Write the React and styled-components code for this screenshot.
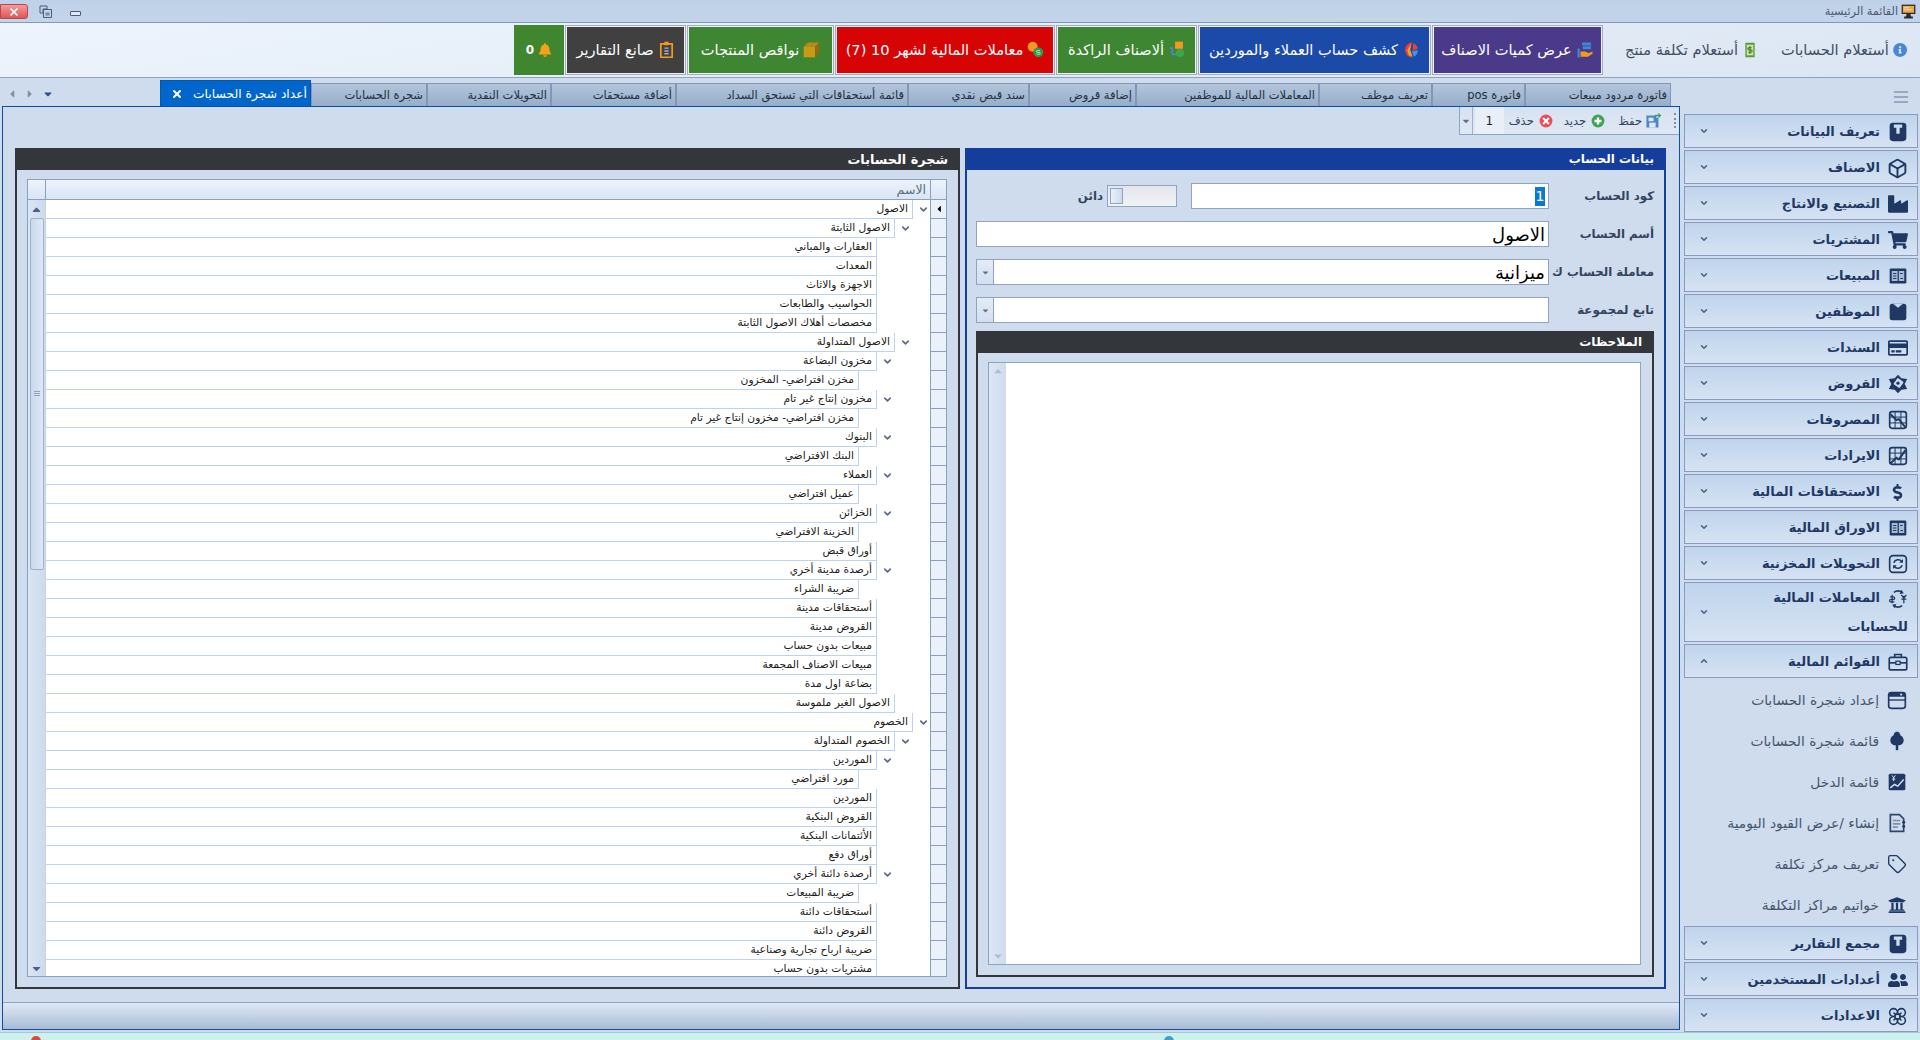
import React from "react";
import styled, { createGlobalStyle } from "styled-components";
import { FaBell, FaInfoCircle, FaIndustry, FaShoppingCart, FaDollarSign, FaUniversity, FaUserFriends, FaRegCreditCard, FaCaretDown, FaCaretLeft, FaCaretRight, FaCaretUp } from "react-icons/fa";
import { LuBox, LuChevronDown, LuChevronUp, LuFlower, LuTag, LuX, LuMenu } from "react-icons/lu";

const Global = createGlobalStyle`
  html, body { margin: 0; padding: 0; height: 100%; overflow: hidden; background: #cfdcee; }
  body { font-family: "DejaVu Sans", "Noto Sans", Tahoma, sans-serif; }
  #root { height: 100%; }
  * { box-sizing: border-box; }
`;

const Shell = styled.div`
  direction: rtl;
  width: 1920px;
  height: 1040px;
  display: flex;
  flex-direction: column;
  background: #cfdcee;
  overflow: hidden;
`;

/* ---------- title bar ---------- */
const TitleBar = styled.div`
  height: 23px;
  flex: none;
  display: flex;
  align-items: center;
  padding: 0 4px 0 0;
  background: linear-gradient(#bfd1e8, #c3d4ea);
  border-bottom: 1px solid #7f9bbb;
`;
const TitleText = styled.span`
  font-size: 11.2px;
  color: #4a5a73;
  margin-right: 3px;
`;
const WindowControls = styled.div`
  margin-right: auto;
  display: flex;
  align-items: center;
  direction: ltr;
  gap: 11px;
`;
const CloseButton = styled.div`
  width: 28px;
  height: 15px;
  margin-top: 1px;
  border: 1px solid #b64a4a;
  border-radius: 0 3px 3px 0;
  background: linear-gradient(#f59a9a, #dd5858);
  display: flex;
  align-items: center;
  justify-content: center;
  color: #fff;
`;
const RestoreIcon = styled.svg`
  width: 13px;
  height: 13px;
  color: #4a5a7a;
`;
const MinimizeIcon = styled.div`
  width: 11px;
  height: 5px;
  margin: 4px 0 0 7px;
  border: 1px solid #4a5a7a;
  border-radius: 1px;
  background: #dfe8f4;
`;

/* ---------- ribbon ---------- */
const Ribbon = styled.div`
  height: 55px;
  flex: none;
  display: flex;
  align-items: center;
  gap: 1px;
  padding-right: 13px;
  padding-bottom: 1px;
  background: linear-gradient(170deg, #edf4fd, #dce6f2);
  border-bottom: 1px solid #8ba3c0;
`;
const PlainItem = styled.div`
  width: ${(p) => p.$w}px;
  margin-left: ${(p) => p.$gap}px;
  display: flex;
  align-items: center;
  gap: 4px;
  font-size: 14.6px;
  color: #3f4d63;
  white-space: nowrap;
`;
const RibbonButton = styled.div`
  width: ${(p) => p.$w}px;
  height: 50px;
  display: flex;
  align-items: center;
  justify-content: center;
  gap: 4px;
  font-size: 14.6px;
  color: #fff;
  white-space: nowrap;
  background: ${(p) => p.$bg};
  border: 2px solid #eef2f7;
  outline: 1px solid #a5acb7;
  outline-offset: -1px;
`;
const BellButton = styled.div`
  width: 50px;
  height: 50px;
  display: flex;
  align-items: center;
  justify-content: center;
  gap: 4px;
  color: #fff;
  font-size: 12px;
  font-weight: bold;
  background: #40862f;
`;

/* ---------- body ---------- */
const Body = styled.div`
  flex: 1;
  min-height: 0;
  display: flex;
`;
const Sidebar = styled.aside`
  width: 236px;
  flex: none;
  padding: 0 2px 0 0;
  overflow: hidden;
  display: flex;
  flex-direction: column;
  gap: 2px;
`;
const SidebarTop = styled.div`
  height: 34px;
  flex: none;
  display: flex;
  align-items: center;
  padding-right: 7px;
  padding-top: 3px;
  color: #5f7595;
`;
const GroupItem = styled.div`
  flex: none;
  height: ${(p) => (p.$tall ? 60 : 34)}px;
  display: flex;
  align-items: center;
  padding: 0 9px 0 14px;
  border: 1px solid #8a9bbf;
  background: linear-gradient(#bfd4ec, #d6e3f3);
  color: #1f3864;
  font-size: 13px;
  font-weight: bold;
  line-height: 29px;
`;
const GroupLabel = styled.div`
  flex: 1;
  min-width: 0;
`;
const IconSlot = styled.span`
  display: inline-flex;
  width: 21px;
  height: 20px;
  margin-left: 7px;
  align-items: center;
  justify-content: center;
  vertical-align: middle;
  color: ${(p) => p.$color || "#1f3864"};
`;
const Chevron = styled.span`
  display: flex;
  color: #4b5d80;
`;
const SubList = styled.div`
  flex: none;
  display: flex;
  flex-direction: column;
  margin: -1px 0 -1px;
`;
const SubItem = styled.div`
  height: 41px;
  display: flex;
  align-items: center;
  padding-right: 11px;
  color: #46566e;
  font-size: 13.8px;
  white-space: nowrap;
`;

const Main = styled.main`
  flex: 1;
  min-width: 0;
  display: flex;
  flex-direction: column;
  padding: 0 0 2px 2px;
  margin-right: 4px;
`;
const TabStrip = styled.div`
  height: 28px;
  flex: none;
  display: flex;
  align-items: flex-end;
  padding-right: 9px;
`;
const Tab = styled.div`
  width: ${(p) => p.$w}px;
  height: ${(p) => (p.$active ? 26 : 23)}px;
  flex: none;
  display: flex;
  align-items: center;
  justify-content: space-between;
  padding: 0 3px 0 10px;
  font-size: ${(p) => (p.$active ? 12.3 : 11.5)}px;
  white-space: nowrap;
  overflow: hidden;
  color: ${(p) => (p.$active ? "#fff" : "#22303f")};
  background: ${(p) => (p.$active ? "#0066cc" : "linear-gradient(#b4c5dc, #96adc9)")};
  border: 1px solid ${(p) => (p.$active ? "#0058b0" : "#8097b6")};
  border-bottom: none;
`;
const TabNav = styled.div`
  margin-right: auto;
  margin-bottom: 6px;
  direction: ltr;
  display: flex;
  align-items: center;
  gap: 6px;
  color: #7f8fa8;
  width: 157px;
  padding-left: 4px;
`;
const TabNavActive = styled.span`
  display: flex;
  color: #2a4a9a;
`;
const Panel = styled.section`
  flex: 1;
  min-height: 0;
  display: flex;
  flex-direction: column;
  border: 1px solid #0d4fa3;
  background: #cfdcee;
`;
const ToolRow = styled.div`
  height: 28px;
  flex: none;
  display: flex;
`;
const ToolBar = styled.div`
  width: 220px;
  display: flex;
  align-items: center;
  border-bottom: 1px solid #8ea4c4;
  border-left: 1px solid #8ea4c4;
  background: linear-gradient(#d7e2f1, #dfe8f4);
  font-size: 11.5px;
  color: #33445e;
`;
const Grip = styled.div`
  width: 2px;
  height: 15px;
  margin: 0 3px 0 12px;
  border-right: 2px dotted #7f8fa8;
`;
const ToolAction = styled.div`
  display: flex;
  align-items: center;
  gap: ${(p) => p.$inner}px;
  margin-left: ${(p) => p.$gap}px;
  white-space: nowrap;
`;
const PageBox = styled.div`
  width: 29px;
  height: 100%;
  display: flex;
  align-items: center;
  justify-content: center;
  font-size: 12px;
  background: #e9eff7;
  color: #222;
`;
const ToolDrop = styled.div`
  flex: 1;
  height: 100%;
  margin-right: 2px;
  display: flex;
  align-items: center;
  justify-content: center;
  color: #5f6f88;
  border-right: 1px solid #9fb2cd;
`;
const Content = styled.div`
  flex: 1;
  min-height: 0;
  display: flex;
  gap: 5px;
  padding: 13px 13px 13px 12px;
`;
const GroupBox = styled.div`
  ${(p) => (p.$w ? `width: ${p.$w}px; flex: none;` : "flex: 1; min-width: 0;")}
  margin-top: ${(p) => p.$pull || 0}px;
  display: flex;
  flex-direction: column;
  border: 2px solid ${(p) => p.$color};
  border-top: none;
`;
const GroupHead = styled.div`
  height: 22px;
  flex: none;
  margin: 0 -2px;
  padding: 0 12px;
  display: flex;
  align-items: center;
  font-size: ${(p) => p.$size || 12}px;
  font-weight: bold;
  color: #fff;
  background: ${(p) => p.$color};
`;
const FormArea = styled.div`
  flex: 1;
  min-height: 0;
  display: flex;
  flex-direction: column;
  gap: 12px;
  padding: 13px 10px 10px 9px;
`;
const FormRow = styled.div`
  height: 26px;
  flex: none;
  display: flex;
  align-items: center;
`;
const FieldLabel = styled.div`
  width: 105px;
  flex: none;
  font-size: 11.8px;
  font-weight: 600;
  color: #33445e;
  white-space: nowrap;
`;
const Field = styled.div`
  ${(p) => (p.$w ? `width: ${p.$w}px; flex: none;` : "flex: 1; min-width: 0;")}
  height: 26px;
  display: flex;
  align-items: center;
  padding: 0 3px;
  background: #fff;
  border: 1px solid #8ea4c4;
  color: #000;
  font-size: 18px;
  font-weight: 500;
`;
const Selected = styled.span`
  display: inline-block;
  width: 10px;
  height: 19px;
  line-height: 19px;
  text-align: center;
  font-size: 14px;
  background: #0a78d7;
  color: #fff;
`;
const ComboButton = styled.div`
  width: 17px;
  height: 26px;
  flex: none;
  border: 1px solid #8ea4c4;
  border-right: none;
  display: flex;
  align-items: center;
  justify-content: center;
  color: #5f6f88;
  background: linear-gradient(#e3ecf6, #d3dff0);
`;
const Toggle = styled.div`
  width: 70px;
  height: 22px;
  margin-right: 14px;
  flex: none;
  padding: 2px;
  display: flex;
  direction: ltr;
  border: 1px solid #8ea4c4;
  background: linear-gradient(#e2e5ea, #f2f3f5);
`;
const ToggleKnob = styled.div`
  width: 13px;
  height: 100%;
  border: 1px solid #8ea4c4;
  background: linear-gradient(90deg, #e9f0f9, #cddbed);
`;
const SideLabel = styled.span`
  margin-right: 4px;
  font-size: 11.8px;
  font-weight: 600;
  color: #33445e;
`;
const NotesBody = styled.div`
  flex: 1;
  min-height: 0;
  display: flex;
  padding: 9px 11px 10px 10px;
`;
const Memo = styled.div`
  flex: 1;
  display: flex;
  background: #fff;
  border: 1px solid #8ea4c4;
`;
const MemoBar = styled.div`
  width: 17px;
  margin-right: auto;
  display: flex;
  flex-direction: column;
  justify-content: space-between;
  align-items: center;
  padding: 2px 0;
  color: #b3bdcc;
  background: linear-gradient(90deg, #dce7f3, #cfdcee);
`;
const GridArea = styled.div`
  flex: 1;
  min-height: 0;
  display: flex;
  padding: 9px 11px 10px 10px;
`;
const DataGrid = styled.div`
  flex: 1;
  min-width: 0;
  display: flex;
  flex-direction: column;
  border: 1px solid #8aa0c0;
  background: #fff;
`;
const GridHead = styled.div`
  height: 20px;
  flex: none;
  display: flex;
  background: linear-gradient(#ecf3fc, #d9e5f4);
  border-bottom: 1px solid #8aa0c0;
`;
const HeadCorner = styled.div`
  width: ${(p) => p.$w}px;
  flex: none;
  border-right: ${(p) => (p.$edge ? "1px solid #8aa0c0" : "none")};
  border-left: ${(p) => (p.$edge ? "none" : "1px solid #8aa0c0")};
`;
const HeadTitle = styled.div`
  flex: 1;
  padding: 0 4px 0 0;
  font-size: 12.5px;
  line-height: 19px;
  color: #5a6a85;
`;
const GridBody = styled.div`
  flex: 1;
  min-height: 0;
  display: flex;
`;
const RowList = styled.div`
  flex: 1;
  min-width: 0;
  overflow: hidden;
`;
const TreeRow = styled.div`
  height: 19px;
  display: flex;
`;
const RowMark = styled.div`
  width: 16px;
  flex: none;
  display: flex;
  align-items: center;
  justify-content: center;
  color: #000;
  background: #e9f1fa;
  border-left: 1px solid #8aa0c0;
  border-bottom: 1px solid #8aa0c0;
`;
const Indent = styled.div`
  width: ${(p) => 18 * (p.$level + 1) - 1}px;
  flex: none;
  display: flex;
  align-items: center;
  justify-content: flex-end;
  padding-left: 5px;
  color: #5b6a86;
`;
const TreeCell = styled.div`
  flex: 1;
  min-width: 0;
  padding: 0 4px;
  font-size: 10.7px;
  line-height: 18px;
  white-space: nowrap;
  color: #1c1c1c;
  border-right: 1px solid #bcd3ee;
  border-bottom: 1px solid #bcd3ee;
`;
const ScrollBar = styled.div`
  width: 18px;
  flex: none;
  display: flex;
  flex-direction: column;
  align-items: center;
  justify-content: space-between;
  padding: 3px 0 1px;
  color: #4f6286;
  border-right: 1px solid #c6d4e6;
  background: linear-gradient(90deg, #dbe6f3, #ccdaed);
`;
const ScrollThumb = styled.div`
  width: 14px;
  height: 352px;
  margin: 2px 0 auto;
  border: 1px solid #9fb2cd;
  border-radius: 2px;
  background: linear-gradient(90deg, #c9d8ea, #e0e9f5);
  display: flex;
  align-items: center;
  justify-content: center;
`;
const ThumbGrip = styled.div`
  width: 6px;
  height: 6px;
  background: repeating-linear-gradient(#8fa3c0 0 1px, transparent 1px 2px);
`;
const StatusBar = styled.div`
  height: 27px;
  flex: none;
  border-top: 1px solid #8ea4c4;
  background: linear-gradient(#dfe9f6, #a9bbd4);
`;
const TaskStrip = styled.div`
  height: 8px;
  flex: none;
  position: relative;
  background: #cdf1ef;
  border-top: 1px solid #a9c4d2;
`;
const TaskDot = styled.span`
  position: absolute;
  top: 3px;
  left: ${(p) => p.$x}px;
  width: 10px;
  height: 10px;
  border-radius: 50%;
  background: ${(p) => p.$bg};
`;

/* ---------- drawn icons ---------- */
const Svg = ({ children, s = 20, vb = "0 0 24 24" }) => (
  <svg width={s} height={s} viewBox={vb} aria-hidden="true">{children}</svg>
);
const NAVY = "#1f3864";
const BookIcon = () => (
  <Svg><rect x="2" y="1" width="20" height="22" rx="4" fill={NAVY} /><path d="M7 3h10v4h-3v7H10V7H7z" fill="#cfdcee" /></Svg>
);
const LedgerIcon = () => (
  <Svg><rect x="2" y="3" width="20" height="18" rx="1.5" fill={NAVY} /><rect x="4.5" y="6" width="7" height="12" fill="#a8bcd6" /><rect x="13" y="6" width="6.5" height="12" fill="#a8bcd6" /><path d="M6 9h4M6 12h4M6 15h4M14.5 9h3M15 15h3" stroke={NAVY} strokeWidth="1.3" /></Svg>
);
const ShirtIcon = () => (
  <Svg><rect x="2" y="2" width="20" height="20" rx="3" fill={NAVY} /><path d="M6 2l6 5 6-5v0h-2l-4 3-4-3z" fill="#cfdcee" /><path d="M8 2l4 4 4-4z" fill="#cfdcee" /></Svg>
);
const GridChart = ({ up }) => (
  <Svg>
    <rect x="2" y="2" width="20" height="20" rx="3" fill="none" stroke={NAVY} strokeWidth="2" />
    <path d="M8.5 2v20M15.5 2v20M2 8.5h20M2 15.5h20" stroke={NAVY} strokeWidth="1.2" />
    <path d={up ? "M3 21l7-7 3 2 8-11" : "M3 5l7 7 3-1 8 10"} fill="none" stroke={NAVY} strokeWidth="2.4" />
  </Svg>
);
const LoanIcon = () => (
  <Svg><path d="M12 1l4 4 7 1-3 6 3 6-7 1-4 4-4-4-7-1 3-6-3-6 7-1z" fill={NAVY} /><rect x="8" y="6" width="9" height="9" rx="1" transform="rotate(35 12 11)" fill="#cfdcee" /><circle cx="12" cy="11" r="2" fill={NAVY} /></Svg>
);
const TransferIcon = () => (
  <Svg><rect x="2" y="2" width="20" height="20" rx="4" fill="none" stroke={NAVY} strokeWidth="2" /><path d="M7 10.5A5.5 5.5 0 0 1 16.5 9M17 13.5A5.5 5.5 0 0 1 7.5 15" fill="none" stroke={NAVY} strokeWidth="2" /><path d="M18 6v4.5h-4.5zM6 18v-4.5h4.5z" fill={NAVY} /></Svg>
);
const ExchangeIcon = () => (
  <Svg><g fill="none" stroke={NAVY} strokeWidth="2"><path d="M7 4a9 9 0 0 1 10 0M7 20a9 9 0 0 0 10 0" /></g><path d="M16 1l3 4-5 1zM8 23l-3-4 5-1z" fill={NAVY} /><path d="M5 7v10M2.5 9.5h4a1.5 1.5 0 0 1 0 3h-3a1.5 1.5 0 0 0 0 3h4M19 8v9M16 7l3 4 3-4M16 12h6" fill="none" stroke={NAVY} strokeWidth="1.5" /></Svg>
);
const BriefcaseIcon = () => (
  <Svg><rect x="1.5" y="6.5" width="21" height="15" rx="2" fill="none" stroke={NAVY} strokeWidth="2" /><path d="M8 6V3h8v3" fill="none" stroke={NAVY} strokeWidth="2" /><path d="M2 13h20" stroke={NAVY} strokeWidth="2" /><rect x="9.5" y="11" width="5" height="4" fill="#cfdcee" stroke={NAVY} strokeWidth="1.5" /></Svg>
);
const ChartOfAccountsIcon = () => (
  <Svg><rect x="2" y="3" width="20" height="19" rx="3" fill="none" stroke={NAVY} strokeWidth="2" /><path d="M2 8c0-3 1-5 4-5h13c2 0 3 2 3 5z" fill={NAVY} /><path d="M2 12h20" stroke={NAVY} strokeWidth="1.6" /><circle cx="17" cy="5.5" r="1.3" fill="#cfdcee" /></Svg>
);
const TreeIcon = () => (
  <Svg><path d="M12 1c3 0 4 3 4 4 3 1 4 4 4 6 0 4-3 6-6 6h-4c-3 0-6-2-6-6 0-2 1-5 4-6 0-1 1-4 4-4z" fill={NAVY} /><path d="M10.5 15h3v8h-3z" fill={NAVY} /></Svg>
);
const IncomeIcon = () => (
  <Svg><rect x="2" y="2" width="20" height="20" rx="2" fill={NAVY} /><path d="M4 19l5-4 4 2 7-8" fill="none" stroke="#cfdcee" strokeWidth="1.8" /><path d="M6 4l2 3 2-3M8 7v4M6 8.5h4" fill="none" stroke="#cfdcee" strokeWidth="1.2" /></Svg>
);
const JournalIcon = () => (
  <Svg><path d="M4 2h11l5 5v15H4z" fill="none" stroke="#2f4670" strokeWidth="2" /><path d="M7 9h9M7 13h9M7 17h6" stroke="#7f8fa8" strokeWidth="2" /><circle cx="20" cy="11" r="1.8" fill={NAVY} /><circle cx="20" cy="16" r="1.8" fill={NAVY} /></Svg>
);
const SaveIcon = () => (
  <Svg s={17}><path d="M2 5h14v3h3v14H2z" fill="#4f86c6" /><rect x="5" y="8" width="7" height="5" fill="#dfe8f4" /><rect x="6" y="15" width="9" height="7" fill="#dfe8f4" /><path d="M14 4h5V1l4 4-4 4V6h-5z" fill="#3ba54a" /></Svg>
);
const PlusCircle = () => (
  <Svg s={14}><circle cx="12" cy="12" r="11" fill="#3aa655" /><path d="M12 6v12M6 12h12" stroke="#fff" strokeWidth="4" /></Svg>
);
const CrossCircle = () => (
  <Svg s={14}><circle cx="12" cy="12" r="11" fill="#ee4b55" /><path d="M7 7l10 10M17 7L7 17" stroke="#fff" strokeWidth="3.5" /></Svg>
);
const MoneyNote = () => (
  <Svg s={16}><rect x="5" y="1" width="14" height="22" rx="1" fill="#5a9a3a" /><rect x="7" y="4" width="10" height="16" fill="#cfe2a8" /><path d="M12 6v12M14.5 8.5h-4a1.7 1.7 0 0 0 0 3.4h3a1.7 1.7 0 0 1 0 3.4H9.5" fill="none" stroke="#3b7a25" strokeWidth="1.6" /></Svg>
);
const StockIcon = () => (
  <Svg s={18}><rect x="8" y="2" width="12" height="4" fill="#3f86d6" /><rect x="9" y="7" width="11" height="4" fill="#3f86d6" /><rect x="2" y="10" width="3" height="12" fill="#3f86d6" /><path d="M6 14h6c2 0 3 2 5 2l5-2v3l-6 4H6z" fill="#f39a1e" /></Svg>
);
const PieIcon = () => (
  <Svg s={18}><path d="M14 2a10 10 0 1 0 0 20l-4-10z" fill="#e8413c" /><path d="M15 3a10 10 0 0 1 6 7l-7 3z" fill="#e8413c" /><path d="M21 12a10 10 0 0 1-5 9l-3-7z" fill="#4a90e2" /><path d="M12 4l-1 8 3 9-5-2-2-7z" fill="#f0a02a" /></Svg>
);
const CartBoxIcon = () => (
  <Svg s={17}><rect x="10" y="1" width="11" height="10" fill="#f39a1e" /><path d="M2 10h4v9h9" fill="none" stroke="#4f86c6" strokeWidth="2.5" /><circle cx="17" cy="17" r="6" fill="#3ba54a" /></Svg>
);
const CoinsIcon = () => (
  <Svg s={17}><circle cx="8" cy="8" r="7" fill="#f39a1e" /><circle cx="16" cy="16" r="7" fill="#2f9a4a" /><path d="M18.5 13.5h-4a1.2 1.2 0 0 0 0 2.5h3a1.2 1.2 0 0 1 0 2.5h-4" fill="none" stroke="#bde3c4" strokeWidth="1.3" /></Svg>
);
const CrateIcon = () => (
  <Svg s={17}><path d="M1 8l6-6h16l-6 6z" fill="#b98a16" /><path d="M1 8h16v15H1z" fill="#c99a16" /><path d="M17 8l6-6v15l-6 6z" fill="#8f6c10" /></Svg>
);
const ClipIcon = () => (
  <Svg s={17}><path d="M4 4h16v19H4z" fill="none" stroke="#f39a1e" strokeWidth="2.4" /><rect x="9" y="1" width="6" height="5" fill="#f39a1e" /><path d="M9 10h6M9 14h6M9 18h6" stroke="#9fb2cd" strokeWidth="2" /></Svg>
);
const DesktopIcon = () => (
  <Svg s={15}><rect x="1" y="1" width="22" height="15" fill="#2b2b2b" /><rect x="3" y="3" width="18" height="11" fill="#f0a848" /><path d="M5 6h8M5 9h12" stroke="#fbe3b5" strokeWidth="1.5" /><path d="M9 16h6l1 4H8zM5 20h14v3H5z" fill="#2b2b2b" /></Svg>
);

const TABS = [
  ["فاتورة مردود مبيعات", 146], ["فاتورة pos", 93], ["تعريف موظف", 113],
  ["المعاملات المالية للموظفين", 183], ["إضافة قروض", 107], ["سند قبض نقدي", 121],
  ["قائمة أستحقاقات التي تستحق السداد", 232], ["أضافة مستحقات", 125], ["التحويلات النقدية", 124],
  ["شجرة الحسابات", 116],
];

const TOP_GROUPS = [
  ["تعريف البيانات", <BookIcon />], ["الاصناف", <LuBox size={21} strokeWidth={2.2} />],
  ["التصنيع والانتاج", <FaIndustry size={20} />], ["المشتريات", <FaShoppingCart size={20} />],
  ["المبيعات", <LedgerIcon />], ["الموظفين", <ShirtIcon />],
  ["السندات", <FaRegCreditCard size={20} />], ["القروض", <LoanIcon />],
  ["المصروفات", <GridChart />], ["الايرادات", <GridChart up />],
  ["الاستحقاقات المالية", <FaDollarSign size={17} />], ["الاوراق المالية", <LedgerIcon />],
  ["التحويلات المخزنية", <TransferIcon />],
];
const SUB_ITEMS = [
  ["إعداد شجرة الحسابات", <ChartOfAccountsIcon />],
  ["قائمة شجرة الحسابات", <TreeIcon />],
  ["قائمة الدخل", <IncomeIcon />],
  ["إنشاء /عرض القيود اليومية", <JournalIcon />],
  ["تعريف مركز تكلفة", <LuTag size={20} strokeWidth={1.6} />],
  ["خواتيم مراكز التكلفة", <FaUniversity size={18} />],
];
const BOTTOM_GROUPS = [
  ["مجمع التقارير", <BookIcon />], ["أعدادات المستخدمين", <FaUserFriends size={20} />],
  ["الاعدادات", <LuFlower size={21} strokeWidth={1.8} />],
];

const TREE = [
  ["الاصول", 0, 1], ["الاصول الثابتة", 1, 1], ["العقارات والمباني", 2], ["المعدات", 2], ["الاجهزة والاثاث", 2],
  ["الحواسيب والطابعات", 2], ["مخصصات أهلاك الاصول الثابتة", 2], ["الاصول المتداولة", 1, 1], ["مخزون البضاعة", 2, 1],
  ["مخزن افتراضي- المخزون", 3], ["مخزون إنتاج غير تام", 2, 1], ["مخزن افتراضي- مخزون إنتاج غير تام", 3],
  ["البنوك", 2, 1], ["البنك الافتراضي", 3], ["العملاء", 2, 1], ["عميل افتراضي", 3], ["الخزائن", 2, 1],
  ["الخزينة الافتراضي", 3], ["أوراق قبض", 2], ["أرصدة مدينة أخري", 2, 1], ["ضريبة الشراء", 3], ["أستحقاقات مدينة", 2],
  ["القروض مدينة", 2], ["مبيعات بدون حساب", 2], ["مبيعات الاصناف المجمعة", 2], ["بضاعة اول مدة", 2],
  ["الاصول الغير ملموسة", 1], ["الخصوم", 0, 1], ["الخصوم المتداولة", 1, 1], ["الموردين", 2, 1], ["مورد افتراضي", 3],
  ["الموردين", 2], ["القروض البنكية", 2], ["الأئتمانات البنكية", 2], ["أوراق دفع", 2], ["أرصدة دائنة أخري", 2, 1],
  ["ضريبة المبيعات", 3], ["أستحقاقات دائنة", 2], ["القروض دائنة", 2], ["ضريبة ارباح تجارية وصناعية", 2], ["مشتريات بدون حساب", 2],
];

const Group = ({ icon, label, tall, open, children }) => (
  <GroupItem $tall={tall}>
    <GroupLabel>
      <IconSlot>{icon}</IconSlot>
      {label}
      {children}
    </GroupLabel>
    <Chevron>{open ? <LuChevronUp size={10} strokeWidth={3.5} /> : <LuChevronDown size={10} strokeWidth={3.5} />}</Chevron>
  </GroupItem>
);

export default function App() {
  return (
    <Shell>
      <Global />
      <TitleBar>
        <DesktopIcon />
        <TitleText>القائمة الرئيسية</TitleText>
        <WindowControls>
          <CloseButton><LuX size={12} strokeWidth={3.5} /></CloseButton>
          <RestoreIcon viewBox="0 0 13 13" aria-hidden="true">
            <path d="M1 1h7v3H4v4H1zM4.5 4.5h8v8h-8z" fill="none" stroke="currentColor" />
            <rect x="6.5" y="7.5" width="4" height="3" fill="currentColor" opacity=".6" />
          </RestoreIcon>
          <MinimizeIcon />
        </WindowControls>
      </TitleBar>

      <Ribbon>
        <PlainItem $w={126} $gap={22}><FaInfoCircle size={16} color="#4a86d8" />أستعلام الحسابات</PlainItem>
        <PlainItem $w={142} $gap={12}><MoneyNote />أستعلام تكلفة منتج</PlainItem>
        <RibbonButton $w={171} $bg="#4b3a8a"><StockIcon />عرض كميات الاصناف</RibbonButton>
        <RibbonButton $w={233} $bg="#1b4aa8"><PieIcon />كشف حساب العملاء والموردين</RibbonButton>
        <RibbonButton $w={141} $bg="#3e8631"><CartBoxIcon />ألاصناف الراكدة</RibbonButton>
        <RibbonButton $w={220} $bg="#d60404"><CoinsIcon />معاملات المالية لشهر 10 (7)</RibbonButton>
        <RibbonButton $w={147} $bg="#3e8631"><CrateIcon />نواقص المنتجات</RibbonButton>
        <RibbonButton $w={121} $bg="#404040"><ClipIcon />صانع التقارير</RibbonButton>
        <BellButton><FaBell size={14} color="#f7a01c" />0</BellButton>
      </Ribbon>

      <Body>
        <Sidebar>
          <SidebarTop><LuMenu size={20} strokeWidth={1.2} /></SidebarTop>
          {TOP_GROUPS.map(([label, icon]) => <Group key={label} label={label} icon={icon} />)}
          <Group tall icon={<ExchangeIcon />} label="المعاملات المالية"><br />للحسابات</Group>
          <Group open icon={<BriefcaseIcon />} label="القوائم المالية" />
          <SubList>
            {SUB_ITEMS.map(([label, icon]) => (
              <SubItem key={label}><IconSlot>{icon}</IconSlot>{label}</SubItem>
            ))}
          </SubList>
          {BOTTOM_GROUPS.map(([label, icon]) => <Group key={label} label={label} icon={icon} />)}
        </Sidebar>

        <Main>
          <TabStrip>
            {TABS.map(([label, w]) => <Tab key={label} $w={w}>{label}</Tab>)}
            <Tab $active $w={151}>أعداد شجرة الحسابات<LuX size={12} strokeWidth={4} /></Tab>
            <TabNav>
              <FaCaretLeft size={12} />
              <FaCaretRight size={12} />
              <TabNavActive><FaCaretDown size={12} /></TabNavActive>
            </TabNav>
          </TabStrip>

          <Panel>
            <ToolRow>
              <ToolBar>
                <Grip />
                <ToolAction $inner={3} $gap={13}><SaveIcon />حفظ</ToolAction>
                <ToolAction $inner={5} $gap={11}><PlusCircle />جديد</ToolAction>
                <ToolAction $inner={5} $gap={5}><CrossCircle />حذف</ToolAction>
                <PageBox>1</PageBox>
                <ToolDrop><FaCaretDown size={10} /></ToolDrop>
              </ToolBar>
            </ToolRow>
            <Content>
              <GroupBox $w={701} $color="#153e9c">
                <GroupHead $color="#153e9c">بيانات الحساب</GroupHead>
                <FormArea>
                  <FormRow>
                    <FieldLabel>كود الحساب</FieldLabel>
                    <Field $w={358}><Selected>1</Selected></Field>
                    <Toggle><ToggleKnob /></Toggle>
                    <SideLabel>دائن</SideLabel>
                  </FormRow>
                  <FormRow>
                    <FieldLabel>أسم الحساب</FieldLabel>
                    <Field>الاصول</Field>
                  </FormRow>
                  <FormRow>
                    <FieldLabel>معاملة الحساب ك</FieldLabel>
                    <Field>ميزانية</Field>
                    <ComboButton><FaCaretDown size={9} /></ComboButton>
                  </FormRow>
                  <FormRow>
                    <FieldLabel>تابع لمجموعة</FieldLabel>
                    <Field />
                    <ComboButton><FaCaretDown size={9} /></ComboButton>
                  </FormRow>
                  <GroupBox $color="#33363b" $pull={-4}>
                    <GroupHead $color="#33363b">الملاحظات</GroupHead>
                    <NotesBody>
                      <Memo>
                        <MemoBar><FaCaretUp size={12} /><FaCaretDown size={12} /></MemoBar>
                      </Memo>
                    </NotesBody>
                  </GroupBox>
                </FormArea>
              </GroupBox>

              <GroupBox $color="#33363b">
                <GroupHead $color="#33363b" $size={12.8}>شجرة الحسابات</GroupHead>
                <GridArea>
                  <DataGrid>
                    <GridHead>
                      <HeadCorner $w={16} />
                      <HeadTitle>الاسم</HeadTitle>
                      <HeadCorner $w={18} $edge />
                    </GridHead>
                    <GridBody>
                      <RowList>
                        {TREE.map(([label, level, expandable], i) => (
                          <TreeRow key={label + i}>
                            <RowMark>{i === 0 ? <FaCaretLeft size={10} /> : null}</RowMark>
                            <Indent $level={level}>
                              {expandable ? <LuChevronDown size={11} strokeWidth={3.5} /> : null}
                            </Indent>
                            <TreeCell>{label}</TreeCell>
                          </TreeRow>
                        ))}
                      </RowList>
                      <ScrollBar>
                        <FaCaretUp size={13} />
                        <ScrollThumb><ThumbGrip /></ScrollThumb>
                        <FaCaretDown size={13} />
                      </ScrollBar>
                    </GridBody>
                  </DataGrid>
                </GridArea>
              </GroupBox>
            </Content>
            <StatusBar />
          </Panel>
        </Main>
      </Body>
      <TaskStrip>
        <TaskDot $x={31} $bg="#d9483b" />
        <TaskDot $x={1164} $bg="#3f9fc6" />
      </TaskStrip>
    </Shell>
  );
}
